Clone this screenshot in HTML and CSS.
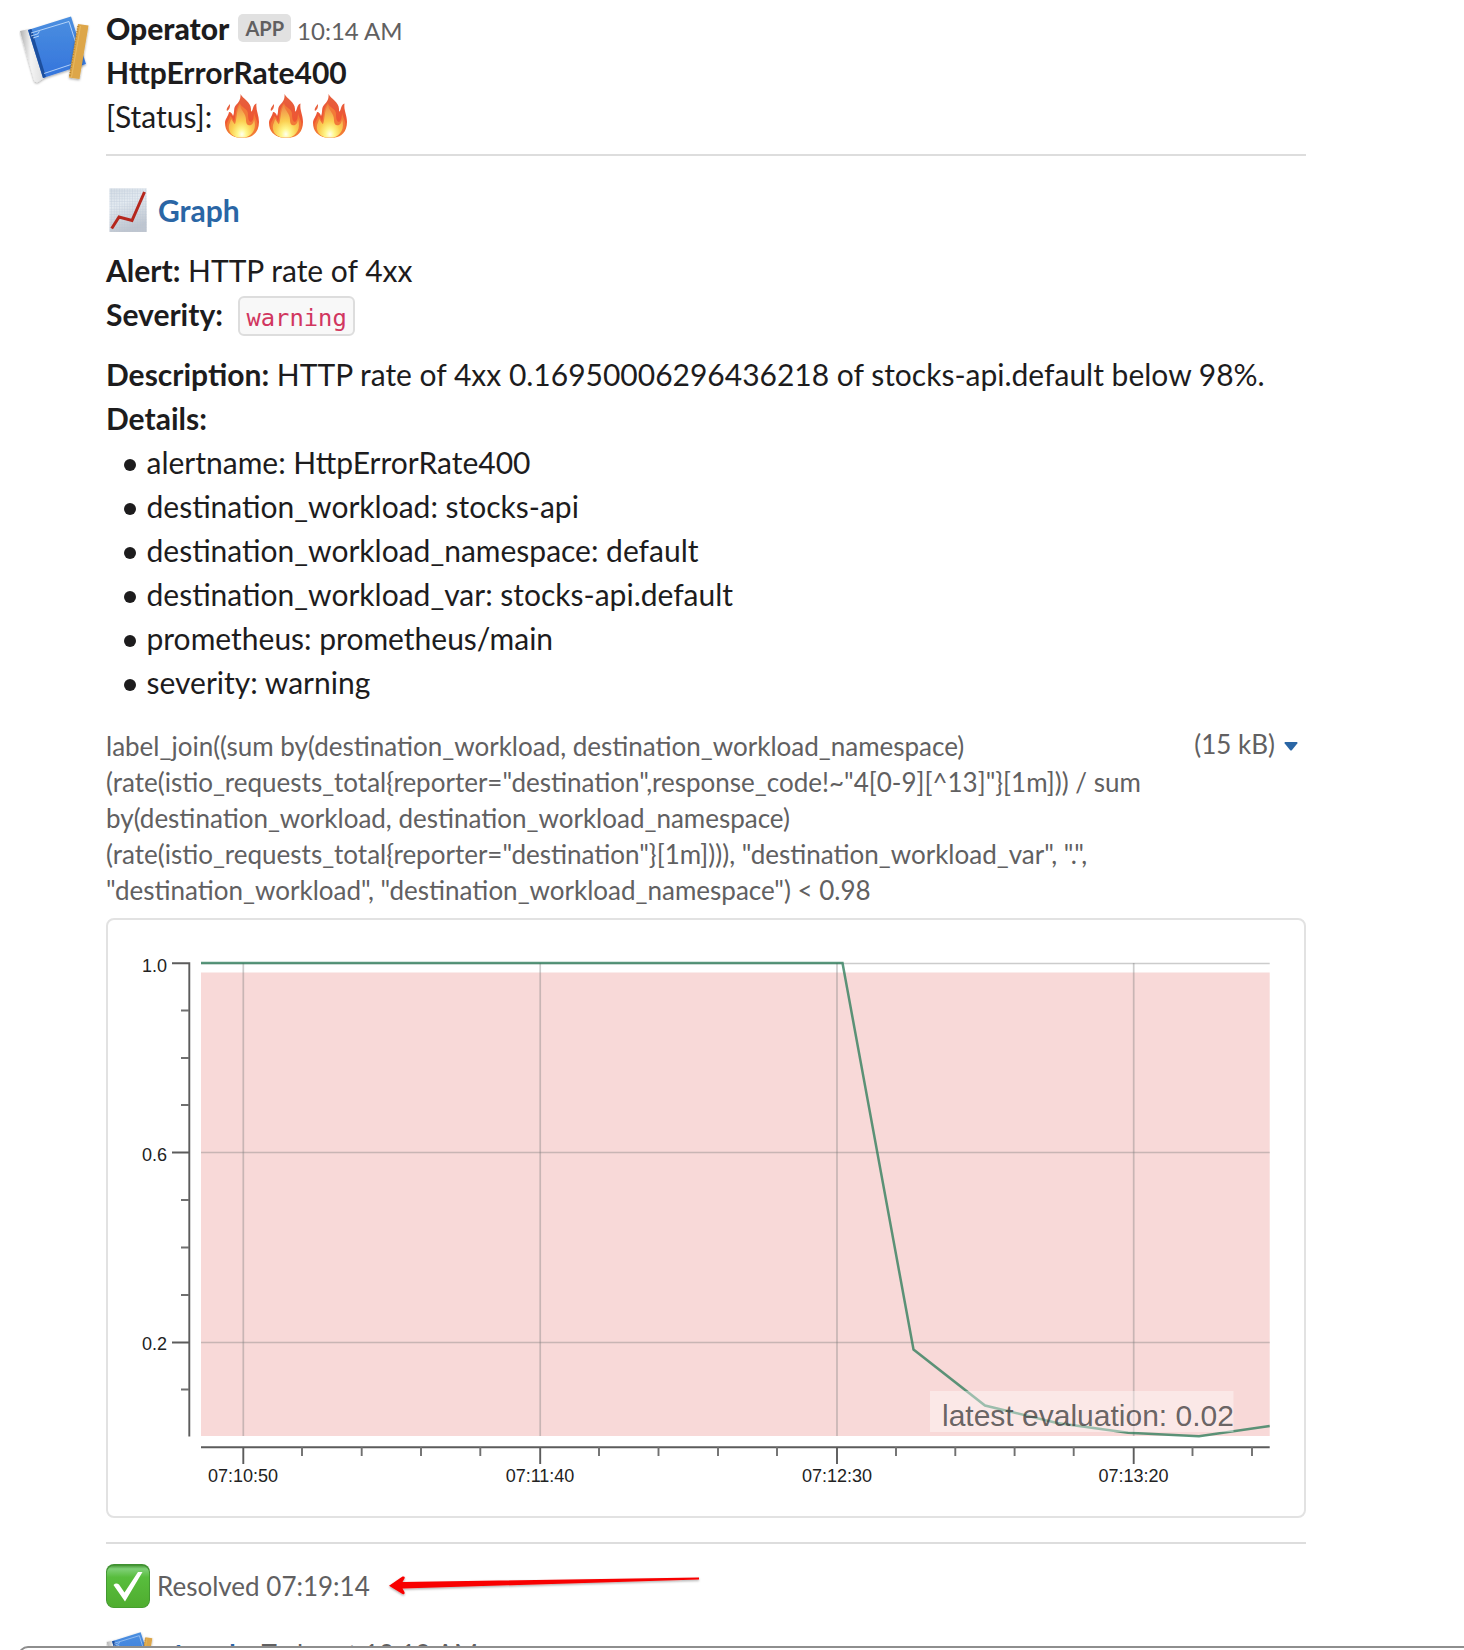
FILE: index.html
```html
<!DOCTYPE html>
<html lang="en">
<head>
<meta charset="utf-8">
<title>Operator alert</title>
<link rel="stylesheet" href="styles.css">
</head>
<body>
<svg class="defs" aria-hidden="true">
  <defs>
    <linearGradient id="cover" x1="0" y1="0" x2="0" y2="1"><stop offset="0" stop-color="#4b8fe0"/><stop offset="1" stop-color="#3474dc"/></linearGradient>
    <linearGradient id="spine" x1="0" y1="0" x2="1" y2="0"><stop offset="0" stop-color="#b0b0b0"/><stop offset=".45" stop-color="#f4f4f4"/><stop offset="1" stop-color="#dedede"/></linearGradient>
    <linearGradient id="flame" x1="0" y1="0" x2="0" y2="1"><stop offset="0" stop-color="#e5603f"/><stop offset=".6" stop-color="#ee5533"/><stop offset="1" stop-color="#f48a35"/></linearGradient>
    <radialGradient id="glow" cx=".5" cy=".9" r=".85"><stop offset="0" stop-color="#fffff0"/><stop offset=".2" stop-color="#fff78c"/><stop offset=".48" stop-color="#fbd052"/><stop offset="1" stop-color="#ef8d4b"/></radialGradient>
    <linearGradient id="paper" x1="0" y1="0" x2=".3" y2="1"><stop offset="0" stop-color="#d5dde5"/><stop offset=".4" stop-color="#e4ebf1"/><stop offset="1" stop-color="#c0c6cf"/></linearGradient>
    <linearGradient id="green" x1="0" y1="0" x2="0" y2="1"><stop offset="0" stop-color="#4b9d3b"/><stop offset=".08" stop-color="#7fd077"/><stop offset=".28" stop-color="#58bd3d"/><stop offset="1" stop-color="#4fad2f"/></linearGradient>
    <pattern id="cells" width="2.6" height="2.6" patternUnits="userSpaceOnUse"><path d="M0 .4h2.6M.4 0v2.6" stroke="#b4c4d4" stroke-width=".5" opacity=".6"/></pattern>
    <filter id="shade" x="-20%" y="-20%" width="140%" height="150%"><feDropShadow dx="0" dy="1.2" stdDeviation="1.2" flood-opacity=".35"/></filter>
    <symbol id="book" viewBox="0 0 72 72">
      <g filter="url(#shade)">
        <path d="M1 15L10 13 25 62 19 66Q16 67 15 64Z" fill="url(#spine)"/>
        <path d="M9 14L52 .500 67 48 24 62Z" fill="url(#cover)"/>
        <path d="M9 14L12.500 13 27 61 24 62Z" fill="#1e4f9e"/>
        <path d="M12 17L50 5.500 62.500 45 25 57.500M12 20l7-2.200 1.300-2.500M14 22l6-2" fill="none" stroke="#d5e8ff" stroke-width=".9" opacity=".85"/>
      </g>
      <g filter="url(#shade)">
        <path d="M59 8L69.500 9.500 60.500 63 50 61.500Z" fill="#dda648"/>
        <path d="M59 10L50.500 61" stroke="#a9782b" stroke-width="1.500" stroke-dasharray=".8 1.800"/>
        <path d="M61.500 10L52.500 61.400" stroke="#e9b960" stroke-width="1"/>
      </g>
    </symbol>
    <symbol id="fire" viewBox="0 0 44 44">
      <path d="M20.500 0C23 5 31 8 31 15C31 19 32 18 33 14C34 11 35 10 36.500 9.500C35.500 16 39 21 39 28C39 38 33 43 27 43.500H17C10 42 5 37 5 29C5 25 8 23 9 18C11 18 12.500 20 13 22C15 18 13 14 16 11C19 8 21 5 20.500 0Z" fill="url(#flame)"/>
      <path d="M20 9C21 14 28 14 28 20C28 25 29 28 31 28C33 27 34 23 34 19C35 24 38 27 37 31C36 39 31 43 24 43.500H19C12 43 7 38 7 31C7 27 10 25 10 22C12 23 13 25 14 28C16 22 15 15 20 9Z" fill="#f27a38"/>
      <path d="M20 11C21 17 26 19 26 26C26 31 29 32 31 31C33 30 34 27 34 25C37 34 33 42 25 43.500H18C11 42 8 37 9 31C10 28 11 26 11 25C13 27 14 30 15 30C17 25 16 17 20 11Z" fill="url(#glow)"/>
      <path d="M10 10Q10.500 15 7 17Q5.500 15 10 10Z" fill="#e7603d"/>
    </symbol>
  </defs>
</svg>

<main class="page">
  <article class="message">
    <svg class="avatar"><use href="#book"/></svg>
    <div class="body">
      <header class="head">
        <span class="sender">Operator</span><span class="badge">APP</span><time class="time">10:14 AM</time>
      </header>
      <div class="line"><b>HttpErrorRate400</b></div>
      <div class="line status"><span>[Status]:</span><svg class="emoji"><use href="#fire"/></svg><svg class="emoji"><use href="#fire"/></svg><svg class="emoji"><use href="#fire"/></svg></div>
      <hr class="rule">

      <div class="line graph">
        <svg class="emoji" viewBox="0 0 44 44">
          <path d="M3.500 .500H40.700V44H3.500Z" fill="url(#paper)"/>
          <path d="M3.500 .500H40.700V44H3.500Z" fill="url(#cells)"/>
          <path d="M5.700 40.500L13 29 26 32.500 38.500 4" fill="none" stroke="#b5271d" stroke-width="3"/>
        </svg>
        <a class="link">Graph</a>
      </div>

      <section class="facts">
        <div class="line"><b>Alert:</b> HTTP rate of 4xx</div>
        <div class="line severity"><b>Severity:</b><code class="code">warning</code></div>
      </section>
      <section class="facts">
        <div class="line"><b>Description:</b> HTTP rate of 4xx 0.16950006296436218 of stocks-api.default below 98%.</div>
        <div class="line"><b>Details:</b></div>
        <ul class="details">
          <li>alertname: HttpErrorRate400</li>
          <li>destination_workload: stocks-api</li>
          <li>destination_workload_namespace: default</li>
          <li>destination_workload_var: stocks-api.default</li>
          <li>prometheus: prometheus/main</li>
          <li>severity: warning</li>
        </ul>
      </section>

      <div class="file">
        <p class="query">label_join((sum by(destination_workload, destination_workload_namespace)<br>(rate(istio_requests_total{reporter="destination",response_code!~"4[0-9][^13]"}[1m])) / sum<br>by(destination_workload, destination_workload_namespace)<br>(rate(istio_requests_total{reporter="destination"}[1m]))), "destination_workload_var", ".",<br>"destination_workload", "destination_workload_namespace") &lt; 0.98</p>
        <div class="size">(15 kB)<svg class="caret" viewBox="0 0 14 9"><path d="M1 0H13Q14 .500 13.300 1.500L8 8Q7 9 6 8L.700 1.500Q0 .500 1 0Z" fill="#2a66a5"/></svg></div>
      </div>

      <figure class="card">
        <svg class="chart" viewBox="108 920 1196 596">
          <rect x="201" y="972.500" width="1068.700" height="463.500" fill="#f8d9d8"/>
          <g class="grid">
            <path d="M201 963.500H1269.700M201 1152.500H1269.700M201 1342.500H1269.700"/>
            <path d="M243.300 963V1436M540.200 963V1436M837 963V1436M1133.700 963V1436"/>
          </g>
          <path class="axis" d="M172 963.300H189.300V1436.500M172 1152.500H189M172 1342.500H189"/>
          <path class="minor" d="M181 1010.500H189M181 1058H189M181 1105H189M181 1200H189M181 1247.500H189M181 1295H189M181 1389.500H189"/>
          <path class="axis" d="M201 1447.300H1269.700M243.300 1447V1464M540.200 1447V1464M837 1447V1464M1133.700 1447V1464"/>
          <path class="minor" d="M302 1447V1456M361.700 1447V1456M421 1447V1456M480.300 1447V1456M599 1447V1456M658.500 1447V1456M718 1447V1456M777 1447V1456M896 1447V1456M955.300 1447V1456M1014.600 1447V1456M1073.700 1447V1456M1192.500 1447V1456M1252 1447V1456"/>
          <path class="series" d="M201 963H842.500L913.500 1349.500 985 1405.500 1057 1423 1128 1432.700 1199 1436.300 1269.700 1426"/>
          <rect x="930" y="1391" width="303.500" height="41" fill="#fff" opacity=".4"/>
          <text class="latest" x="942" y="1426">latest evaluation: 0.02</text>
          <g class="tick" text-anchor="end">
            <text x="167" y="972">1.0</text><text x="167" y="1161">0.6</text><text x="167" y="1349.500">0.2</text>
          </g>
          <g class="tick" text-anchor="middle">
            <text x="243" y="1481.700">07:10:50</text><text x="540" y="1481.700">07:11:40</text><text x="837" y="1481.700">07:12:30</text><text x="1133.500" y="1481.700">07:13:20</text>
          </g>
        </svg>
      </figure>
      <hr class="rule after-card">

      <footer class="resolved">
        <svg class="emoji" viewBox="0 0 44 44">
          <rect x="0" width="44" height="44" rx="8" fill="#3f9130"/>
          <rect x=".800" y="1.500" width="42.400" height="42" rx="7.500" fill="url(#green)"/>
          <path d="M7.500 21Q10 18.500 13 20.500L18.500 28.500 32 8H36.500L19 37.500Z" fill="#fff"/>
        </svg>
        <span>Resolved 07:19:14</span>
        <svg class="arrow" viewBox="0 0 314 22">
          <g filter="url(#shade)"><path d="M1 10.700L14.500 1.500Q17.500 1 16.500 3.500L14.500 7 311 2.500V4.500L14.500 13.500 16.500 17Q17 20 14.500 19Z" fill="#f80000"/></g>
        </svg>
      </footer>

      <div class="thread">
        <svg class="mini"><use href="#book"/></svg>
        <span class="replies">1 reply</span><span>Today at 10:19 AM</span>
      </div>
    </div>
  </article>
  <div class="composer"></div>
</main>
</body>
</html>
```
FILE: styles.css
```css
* { box-sizing: border-box; }
body {
  margin: 0;
  background: #fff;
  color: #1d1c1d;
  font: 30px/44px Lato, "Liberation Sans", sans-serif;
}
.defs { position: absolute; width: 0; height: 0; }
.page { position: relative; width: 1464px; height: 1650px; overflow: hidden; }
.message { display: flex; padding: 6px 0 0 19px; }
.avatar { width: 72px; height: 72px; margin: 10px 15px 0 0; flex: none; }
.body { width: 1200px; flex: none; }
b { font-weight: 700; }

.head { display: flex; height: 44px; align-items: baseline; }
.sender { font-weight: 900; }
.badge {
  margin-left: 9px;
  padding: 0 7px;
  border-radius: 5px;
  background: #e1e1e1;
  color: #616061;
  font-size: 20px;
  font-weight: 700;
  line-height: 28px;
  position: relative;
  top: -4px;
}
.time { margin-left: 6px; color: #616061; font-size: 24px; }
.line { height: 44px; white-space: nowrap; }
.status, .graph, .severity { display: flex; }
.status span { margin-right: 8px; }
.emoji { width: 44px; height: 44px; flex: none; display: block; }
.rule { height: 2px; margin: 16px 0 0; border: 0; background: #dddddd; }

.graph { margin-top: 32px; gap: 8px; }
.link { color: #2a66a5; font-weight: 700; }
.facts { margin-top: 16px; }
.code {
  height: 40px;
  margin: 4px 0 0 15px;
  padding: 0 6.5px;
  border: 2px solid #dddddd;
  border-radius: 6px;
  background: #f8f8f8;
  color: #d1365f;
  font: 23.8px/41px "DejaVu Sans Mono", monospace;
}
.details { margin: 0; padding: 0; list-style: none; }
.details li { display: flex; align-items: center; padding-left: 18px; }
.details li::before {
  content: "";
  width: 12px;
  height: 12px;
  margin: 6px 10.5px 0 0;
  border-radius: 50%;
  background: #1d1c1d;
}

.file {
  display: flex;
  justify-content: space-between;
  margin-top: 24px;
  color: #616061;
  font-size: 26px;
  line-height: 36px;
}
.query { margin: 0; white-space: nowrap; }
.size { display: flex; margin: -2px 8px 0 0; gap: 9px; }
.caret { width: 14px; height: 9px; margin-top: 16px; }

.card {
  height: 600px;
  margin: 10px 0 0;
  border: 2px solid #e2e2e2;
  border-radius: 8px;
}
.chart { display: block; width: 1196px; height: 596px; }
.grid { fill: none; stroke: #808080; stroke-opacity: .4; stroke-width: 1.7; }
.axis { fill: none; stroke: #5c5c5c; stroke-width: 1.9; }
.minor { stroke: #707070; stroke-width: 1.9; }
.series { fill: none; stroke: #2b7c58; stroke-opacity: .77; stroke-width: 2.5; }
.tick { fill: #222; font: 18px "Liberation Sans", Arial, sans-serif; }
.latest { fill: #333; fill-opacity: .74; font: 30px "Liberation Sans", Arial, sans-serif; }

.after-card { margin-top: 24px; }
.resolved {
  display: flex;
  height: 44px;
  margin-top: 20px;
  color: #616061;
  font-size: 26px;
  line-height: 45px;
}
.resolved span { margin-left: 7px; }
.arrow { width: 314px; height: 22px; margin: 11px 0 0 18px; overflow: visible; }

.thread {
  display: flex;
  margin-top: 24px;
  color: #616061;
  font-size: 26px;
  line-height: 44px;
}
.mini { width: 48px; height: 48px; margin-right: 16px; }
.replies { margin-right: 12px; color: #2a66a5; font-weight: 700; }
.composer {
  position: absolute;
  left: 18px;
  right: -20px;
  top: 1646px;
  height: 60px;
  border: 2px solid #8e8e8e;
  border-radius: 10px;
  background: #fff;
}
```
